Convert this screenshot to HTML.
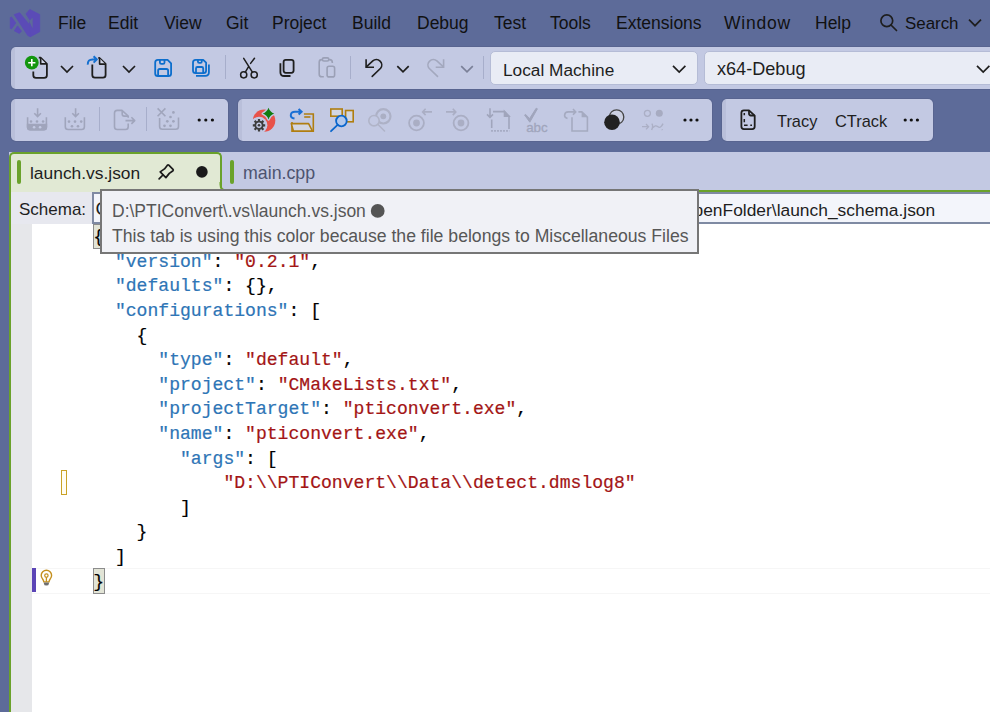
<!DOCTYPE html>
<html><head><meta charset="utf-8">
<style>
html,body{margin:0;padding:0;width:990px;height:712px;overflow:hidden;background:#5d6b99;font-family:"Liberation Sans",sans-serif;}
.a{position:absolute;}
.menu{position:absolute;top:11px;font-size:17.5px;color:#111;line-height:24px;white-space:nowrap;}
.tb{position:absolute;background:linear-gradient(90deg,#b9bfda 0,#b9bfda 4px,#c3c9e3 4px);border-radius:5px;box-shadow:0 0 0 1px rgba(75,85,125,0.3);}
.sep{position:absolute;width:1px;background:#a7aecb;}
.ic{position:absolute;overflow:visible;}
.code{position:absolute;left:93.2px;font-family:"Liberation Mono",monospace;font-size:18.08px;white-space:pre;line-height:24px;color:#000;-webkit-text-stroke:0.2px currentColor;}
.k{color:#2e75b6}.s{color:#a31515}
</style></head><body>
<!-- logo -->
<svg class="ic" style="left:0;top:0" width="50" height="45" viewBox="0 0 50 45">
<g fill="#5b4bb7" stroke="#5b4bb7" stroke-width="0.8" stroke-linejoin="round">
<path d="M10.3 17.6 L11.4 16.9 L15.8 22.9 L11.4 29.0 L10.3 28.3 Z"/>
<path d="M14.3 30.8 L17.6 25.9 L21.5 31.3 L19.2 33.4 Z"/>
<path d="M14.2 14.6 L19.6 12.7 L32.6 28.6 L30.3 36.7 L27.8 35.6 Z"/>
<path d="M25.4 14.4 L29.8 9.5 L39.7 14.5 L39.7 31.7 L30.4 36.7 L29.4 21.3 Z"/>
</g>
<path d="M24.6 13.6 L29.4 21.2" stroke="#5d6b99" stroke-width="1.3"/>
<path d="M29.3 21.3 L32.6 17.6 L32.6 28.5 Z" fill="#5d6b99"/>
</svg>
<div class="menu" style="left:58px">File</div>
<div class="menu" style="left:108px">Edit</div>
<div class="menu" style="left:164px">View</div>
<div class="menu" style="left:226px">Git</div>
<div class="menu" style="left:272px">Project</div>
<div class="menu" style="left:352px">Build</div>
<div class="menu" style="left:417px">Debug</div>
<div class="menu" style="left:494px">Test</div>
<div class="menu" style="left:550px">Tools</div>
<div class="menu" style="left:616px">Extensions</div>
<div class="menu" style="left:724px;letter-spacing:0.8px">Window</div>
<div class="menu" style="left:815px">Help</div>
<div class="menu" style="left:905px;font-size:16.9px;top:11.5px">Search</div>

<svg class="ic" style="left:870px;top:8px" width="120" height="30" viewBox="0 0 120 30" fill="none" stroke="#1e1e1e" stroke-width="1.7">
<circle cx="16.8" cy="12.8" r="5.9"/><path d="M21 17 L26.5 22.5" stroke-linecap="round"/>
<path d="M99 11.7 L105 17.7 L111 11.7"/>
</svg>
<!-- toolbar 1 -->
<div class="tb" style="left:11px;top:47px;width:990px;height:42px"></div>
<!-- toolbar 2 -->
<div class="tb" style="left:11px;top:99px;width:217px;height:42px"></div>
<div class="tb" style="left:238px;top:99px;width:474px;height:42px"></div>
<div class="tb" style="left:722px;top:99px;width:211px;height:42px"></div>

<!-- tb1 icons -->
<svg class="ic" style="left:22px;top:52px" width="30" height="30" viewBox="0 0 30 30" fill="none" stroke="#1e1e1e" stroke-width="1.8" stroke-linejoin="round">
<path d="M11.3 19.5 V23.2 Q11.3 25.9 14 25.9 H22.2 Q24.9 25.9 24.9 23.2 V11.9 L18.6 5.7 H16.8"/>
<path d="M18.7 6.3 L24.3 11.9 H18.7 Z" fill="#d3d7ea" stroke="none"/>
<path d="M18.7 5.9 V11.9 H24.7" stroke-width="1.6"/>
<circle cx="9.8" cy="10.7" r="6.9" fill="#13960f" stroke="none"/>
<path d="M6.2 10.7 H13.4 M9.8 7.1 V14.3" stroke="#fff" stroke-width="1.6"/>
</svg>
<svg class="ic" style="left:82px;top:52px" width="30" height="30" viewBox="0 0 30 30" fill="none" stroke="#1e1e1e" stroke-width="1.8" stroke-linejoin="round">
<path d="M10.3 12.6 V23 Q10.3 25.6 12.9 25.6 H21 Q23.6 25.6 23.6 23 V12 L17.3 5.8 H16.3"/>
<path d="M17.6 6.3 L23.2 12 H17.6 Z" fill="#d3d7ea" stroke="none"/>
<path d="M17.6 6 V12.1 H23.4" stroke-width="1.6"/>
<path d="M5.8 12.6 Q5.6 7.4 10.5 7.4 H14.8 M11.6 4.3 L14.9 7.4 L11.6 10.6" stroke="#1570d0" stroke-width="2"/>
</svg>
<svg class="ic" style="left:148px;top:52px" width="30" height="30" viewBox="0 0 30 30" fill="none" stroke="#0d6ecc" stroke-width="1.8" stroke-linejoin="round">
<path d="M9.8 7.8 H19.6 L23.1 11.3 V21.4 Q23.1 24 20.5 24 H9.8 Q7.2 24 7.2 21.4 V10.4 Q7.2 7.8 9.8 7.8 Z"/>
<path d="M11.9 7.8 V10.5 Q11.9 11.9 13.3 11.9 H15.1 Q16.5 11.9 16.5 10.5 V7.8"/>
<path d="M10.1 24 V18.6 Q10.1 17 11.7 17 H18.5 Q20.1 17 20.1 18.6 V24"/>
</svg>
<svg class="ic" style="left:186px;top:52px" width="30" height="30" viewBox="0 0 30 30" fill="none" stroke="#0d6ecc" stroke-width="1.8" stroke-linejoin="round">
<path d="M9.6 7.8 H17.2 L20.1 10.7 V18.5 Q20.1 21.1 17.5 21.1 H9.6 Q7 21.1 7 18.5 V10.4 Q7 7.8 9.6 7.8 Z"/>
<path d="M11.9 7.8 V9.6 Q11.9 10.9 13.2 10.9 H14.5 Q15.8 10.9 15.8 9.6 V7.8"/>
<path d="M10 21.1 V16.4 Q10 15 11.4 15 H15.8 Q17.2 15 17.2 16.4 V21.1"/>
<path d="M22.9 12.6 V20.3 Q22.9 23.8 19.4 23.8 H10"/>
</svg>
<div class="sep" style="left:225px;top:55px;height:24px"></div>
<svg class="ic" style="left:234px;top:52px" width="30" height="30" viewBox="0 0 30 30" fill="none" stroke="#1e1e1e" stroke-width="1.5" stroke-linecap="round">
<circle cx="9.7" cy="22.8" r="3.1"/><circle cx="20.2" cy="22.8" r="3.1"/>
<path d="M9.7 6.3 L18.4 20.1 M20.5 6.3 L16.6 11.4 M14.6 14.6 L11.3 20.1"/>
</svg>
<svg class="ic" style="left:272px;top:52px" width="30" height="30" viewBox="0 0 30 30" fill="none" stroke="#1e1e1e" stroke-width="1.8" stroke-linejoin="round">
<rect x="11.6" y="7.9" width="10" height="12.9" rx="2.2"/>
<path d="M8.4 11.2 V20.2 Q8.4 24 12.2 24 H18.5"/>
</svg>
<svg class="ic" style="left:312px;top:52px" width="30" height="30" viewBox="0 0 30 30" fill="none" stroke="#9ba0b6" stroke-width="1.6" stroke-linejoin="round">
<path d="M11.8 24.8 H9.8 Q7.2 24.8 7.2 22.2 V10.2 Q7.2 7.6 9.8 7.6 H10.2 M17 7.6 H17.6 Q20.3 7.6 20.3 10.3 V11"/>
<rect x="10.4" y="5.9" width="6.4" height="3.1" rx="1.5"/>
<rect x="15.1" y="14.3" width="7.5" height="10.6" rx="2"/>
</svg>
<div class="sep" style="left:350px;top:56px;height:23px"></div>
<svg class="ic" style="left:358px;top:52px" width="60" height="30" viewBox="0 0 60 30" fill="none" stroke="#1e1e1e" stroke-width="1.6" stroke-linejoin="miter">
<path d="M8.1 7.3 V15.2 H16"/>
<path d="M8.6 14.7 L14.8 8.9 A5.4 5.4 0 0 1 22.6 16.3 L14.2 24.4" stroke-linecap="round"/>
<path d="M39.3 14.2 L45 19.8 L50.7 14.2" stroke-width="1.7"/>
</svg>
<svg class="ic" style="left:420px;top:52px" width="60" height="30" viewBox="0 0 60 30" fill="none" stroke="#a3a8be" stroke-width="1.6" stroke-linejoin="miter">
<path d="M23.6 7.3 V15.2 H15.7"/>
<path d="M23.1 14.7 L16.9 8.9 A5.4 5.4 0 0 0 9.1 16.3 L17.5 24.4" stroke-linecap="round"/>
<path d="M41.2 14.2 L47 19.8 L52.8 14.2" stroke="#7b8098" stroke-width="1.7"/>
</svg>
<div class="sep" style="left:483px;top:56px;height:23px"></div>
<!-- comboboxes -->
<div class="a" style="left:490px;top:51px;width:206px;height:32px;background:#e9ecf5;border:1px solid #b5bcd6;border-radius:5px"></div>
<div class="a" style="left:503px;top:59px;font-size:17.25px;color:#1e1e1e;line-height:22px">Local Machine</div>
<div class="a" style="left:704px;top:51px;width:300px;height:32px;background:#e9ecf5;border:1px solid #b5bcd6;border-radius:5px"></div>
<div class="a" style="left:717px;top:58px;font-size:18.1px;color:#1e1e1e;line-height:22px">x64-Debug</div>

<svg class="ic" style="left:0;top:52px" width="990" height="30" viewBox="0 0 990 30" fill="none" stroke="#1e1e1e" stroke-width="1.7">
<path d="M61 14 L67 20 L73 14"/>
<path d="M123 14 L129 20 L135 14"/>
<path d="M673 13.8 L679.2 20 L685.4 13.8"/>
<path d="M977 13.8 L983.2 20 L989.4 13.8"/>
</svg>
<div class="a" style="left:777px;top:110px;font-size:16.4px;color:#1e1e1e;line-height:22px">Tracy</div>
<div class="a" style="left:835px;top:110px;font-size:16.4px;color:#1e1e1e;line-height:22px">CTrack</div>

<!-- tb2 icons -->
<svg class="ic" style="left:20px;top:104px" width="70" height="32" viewBox="0 0 70 32" fill="none" stroke="#a0a5bc" stroke-width="1.6">
<path d="M17.6 4.2 V12.4 M14.3 9.2 L17.6 12.5 L20.9 9.2"/>
<path d="M7.6 13.2 V23 Q7.6 25.8 10.4 25.8 H23.6 Q26.4 25.8 26.4 23 V13.2"/>
<path d="M7.6 20.5 H26.4 V23 Q26.4 25.8 23.6 25.8 H10.4 Q7.6 25.8 7.6 23 Z" fill="#a0a5bc"/>
<g fill="#a0a5bc" stroke="none"><circle cx="11" cy="17.5" r="1.3"/><circle cx="17" cy="17.5" r="1.3"/><circle cx="23.1" cy="17.5" r="1.3"/></g>
<g fill="#c3c9e3" stroke="none"><circle cx="14.1" cy="23.3" r="1.3"/><circle cx="20.1" cy="23.3" r="1.3"/></g>
<path d="M55.6 4.2 V12.4 M52.3 9.2 L55.6 12.5 L58.9 9.2"/>
<path d="M45.3 13.2 V22.7 Q45.3 25.5 48.1 25.5 H61.6 Q64.4 25.5 64.4 22.7 V13.2"/>
<g fill="#a0a5bc" stroke="none"><circle cx="49" cy="17.6" r="1.3"/><circle cx="55" cy="17.6" r="1.3"/><circle cx="61.2" cy="17.6" r="1.3"/><circle cx="52" cy="22.2" r="1.3"/><circle cx="58" cy="22.2" r="1.3"/></g>
</svg>
<div class="sep" style="left:99px;top:107px;height:24px"></div>
<svg class="ic" style="left:95px;top:104px" width="90" height="32" viewBox="0 0 90 32" fill="none" stroke="#a0a5bc" stroke-width="1.6" stroke-linejoin="round">
<path d="M33.2 13.8 V12 L27 6.4 H22.2 Q19.5 6.4 19.5 9.1 V22.8 Q19.5 25.5 22.2 25.5 H30.5 Q33.2 25.5 33.2 22.8 V19.6"/>
<path d="M27.2 6.6 V10 Q27.2 12.1 29.3 12.1 H33"/>
<path d="M30.5 16.6 H39.6 M36.4 13.3 L39.7 16.6 L36.4 19.9"/>
<path d="M62.6 4.4 L70.4 12.2 M70.4 4.4 L62.6 12.2"/>
<path d="M64.6 14 V22.5 Q64.6 25.3 67.4 25.3 H80.7 Q83.5 25.3 83.5 22.5 V13.5"/>
<g fill="#a0a5bc" stroke="none"><circle cx="78.4" cy="8.4" r="1.35"/><circle cx="75.5" cy="13" r="1.35"/><circle cx="72.3" cy="17.3" r="1.35"/><circle cx="78.4" cy="17.3" r="1.35"/><circle cx="69.5" cy="21.8" r="1.35"/><circle cx="75.5" cy="21.8" r="1.35"/></g>
</svg>
<div class="sep" style="left:146px;top:107px;height:24px"></div>
<svg class="ic" style="left:190px;top:104px" width="30" height="32" viewBox="0 0 30 32" fill="#111">
<circle cx="9.2" cy="16" r="1.6"/><circle cx="15.8" cy="16" r="1.6"/><circle cx="22.4" cy="16" r="1.6"/>
</svg>

<svg class="ic" style="left:245px;top:104px" width="75" height="32" viewBox="0 0 75 32">
<circle cx="19.1" cy="16.6" r="11.2" fill="#e8524a"/>
<circle cx="14" cy="21.2" r="8.4" fill="#c3c9e3"/>
<path d="M23.5 3.8 Q25 8.1 29.2 9.6 Q25 11.1 23.5 15.4 Q22 11.1 17.8 9.6 Q22 8.1 23.5 3.8 Z" fill="#107c10" stroke="#c3c9e3" stroke-width="2.6" stroke-linejoin="round"/>
<path d="M23.5 3.8 Q25 8.1 29.2 9.6 Q25 11.1 23.5 15.4 Q22 11.1 17.8 9.6 Q22 8.1 23.5 3.8 Z" fill="#107c10"/>
<g transform="translate(14 21.3)" fill="#3d3d3d">
<circle r="4.6"/>
<g stroke="#3d3d3d" stroke-width="2.2">
<path d="M0 -6.2 V6.2 M-6.2 0 H6.2 M-4.4 -4.4 L4.4 4.4 M-4.4 4.4 L4.4 -4.4"/>
</g>
<circle r="2.7" fill="#c3c9e3"/>
<circle r="1.3" fill="#3d3d3d"/>
</g>
<path d="M49.5 14.6 Q45.6 14 45.8 11 Q46.2 7.8 50 7.8 H56.3 M53.6 5 L56.6 7.8 L53.6 10.6" fill="none" stroke="#1a6fd4" stroke-width="2"/>
<path d="M47 18 V27.2 H68.3 V10 H58.9" fill="none" stroke="#b07e10" stroke-width="1.6"/>
<path d="M59.2 13 H65.4" fill="none" stroke="#b07e10" stroke-width="1.6"/>
<path d="M46.3 19.6 H63.6 L67.4 27 H48.4 Z" fill="#d3d6e2" stroke="#b07e10" stroke-width="1.6" stroke-linejoin="round"/>
</svg>
<svg class="ic" style="left:325px;top:104px" width="75" height="32" viewBox="0 0 75 32">
<rect x="5.8" y="5" width="11.4" height="7.2" fill="#d3d6e2" stroke="#b07e10" stroke-width="1.6"/>
<rect x="20.6" y="6.5" width="7.6" height="11.3" fill="#d3d6e2" stroke="#b07e10" stroke-width="1.6"/>
<circle cx="16.4" cy="17" r="5.3" fill="#b3c8ec" stroke="#0a66cc" stroke-width="1.8"/>
<path d="M12.6 20.8 L6 27.2" stroke="#0a66cc" stroke-width="1.8" stroke-linecap="round"/>
<circle cx="58.3" cy="12.3" r="7.2" fill="none" stroke="#adb1c6" stroke-width="2.2"/>
<circle cx="58.3" cy="12.3" r="2.9" fill="#abafc4"/>
<circle cx="49" cy="16.7" r="5.2" fill="#c3c9e3" stroke="#b0b4c8" stroke-width="1.6"/>
<path d="M53 20.5 L59.5 27" stroke="#b0b4c8" stroke-width="1.6" stroke-linecap="round"/>
</svg>
<svg class="ic" style="left:400px;top:104px" width="75" height="32" viewBox="0 0 75 32" fill="none" stroke="#aaaec4" stroke-width="1.8">
<circle cx="16.5" cy="19" r="7.4"/><circle cx="16.5" cy="19" r="3.4" fill="#aaaec4" stroke="none"/>
<path d="M22.6 7.9 H32 M25.6 4.7 L22.6 7.9 L25.6 11.1" stroke-width="1.6"/>
<circle cx="61" cy="19" r="7.4"/><circle cx="61" cy="19" r="3.4" fill="#aaaec4" stroke="none"/>
<path d="M46 7.9 H55.8 M52.8 4.7 L55.8 7.9 L52.8 11.1" stroke-width="1.6"/>
</svg>
<svg class="ic" style="left:480px;top:104px" width="75" height="32" viewBox="0 0 75 32" fill="none" stroke="#a0a5bc" stroke-width="1.6">
<path d="M10 4.2 V13.4 M7 10.4 L10 13.4 L13 10.4"/>
<path d="M13 7.6 H24.5 L29 12.3 V25"/>
<path d="M24.5 7.6 L29 12.3 H24.5 Z" fill="#a0a5bc"/>
<path d="M11.7 15.5 V24"/>
<path d="M11.2 26.8 H29.5" stroke-dasharray="1.6 1.4" stroke-width="1.7"/>
<path d="M44.6 11 L45.6 10.4 L49.6 14.6 L56.2 4.2 L57.4 4.8 L49.8 18.2 Z" fill="#a0a5bc" stroke-width="1" stroke-linejoin="round"/>
<text x="46.2" y="27.6" font-family="Liberation Sans" font-size="13.6" fill="#a0a5bc" stroke="#a0a5bc" stroke-width="0.3" textLength="21.5" lengthAdjust="spacingAndGlyphs">abc</text>
</svg>
<svg class="ic" style="left:558px;top:104px" width="75" height="32" viewBox="0 0 75 32">
<path d="M9.5 14.5 Q6.4 13.6 6.6 11.1 Q6.9 7.9 10.3 7.9 H17.4 M15 5 L17.7 7.9 L15 10.7" fill="none" stroke="#a5aac0" stroke-width="1.6"/>
<path d="M14 13.2 V27 H29.4 V13.2 L23.8 7.9 H20.4" fill="none" stroke="#a5aac0" stroke-width="1.6"/>
<path d="M23.6 8 L29.4 13.2 H23.6 Z" fill="#a5aac0"/>
<circle cx="58.6" cy="13" r="7.2" fill="#ccd0e2" stroke="#444" stroke-width="1.3"/>
<circle cx="54" cy="18.3" r="7.8" fill="#222"/>
</svg>
<svg class="ic" style="left:636px;top:104px" width="75" height="32" viewBox="0 0 75 32">
<circle cx="11.4" cy="9.3" r="3" fill="none" stroke="#abafc5" stroke-width="1.3"/>
<circle cx="23.3" cy="9.3" r="3.5" fill="#a7abc1"/>
<path d="M6 22.7 H12.3 M10 20 L12.6 22.7 L10 25.4" fill="none" stroke="#abafc5" stroke-width="1.3"/>
<path d="M15.8 19.6 Q17.6 21.8 15.6 26 M17.2 23.6 Q19.2 20.6 22 22.8 Q24.6 24.8 27 19.6 M25.9 25.4 L26.4 26.2" fill="none" stroke="#abafc5" stroke-width="1.4"/>
<g fill="#111"><circle cx="49" cy="16" r="1.6"/><circle cx="55" cy="16" r="1.6"/><circle cx="61" cy="16" r="1.6"/></g>
</svg>
<svg class="ic" style="left:732px;top:104px" width="35" height="32" viewBox="0 0 35 32" fill="none" stroke="#1e1e1e" stroke-width="1.8" stroke-linejoin="round">
<path d="M11.9 6.3 H17 L22.7 11.6 V22.6 Q22.7 25.1 20.2 25.1 H11.9 Q9.4 25.1 9.4 22.6 V8.8 Q9.4 6.3 11.9 6.3 Z"/>
<path d="M17 6.5 V9.6 Q17 11.5 18.9 11.5 H22.5"/>
<path d="M12.3 9 V11.3 M12.3 15 V18.2 M12 21.2 H15.6 M18.3 21.2 H20" stroke-width="1.5"/>
</svg>
<svg class="ic" style="left:896px;top:104px" width="30" height="32" viewBox="0 0 30 32" fill="#111">
<circle cx="9.2" cy="16" r="1.6"/><circle cx="15.3" cy="16" r="1.6"/><circle cx="21.4" cy="16" r="1.6"/>
</svg>
<!-- tab strip -->
<div class="a" style="left:9px;top:152px;width:981px;height:40px;background:#c3c9e3"></div>
<div class="a" style="left:9px;top:152px;width:209px;height:40px;background:#e1e9d4;border:2px solid #6aa22b;border-bottom:none;border-radius:5px 5px 0 0"></div>
<div class="a" style="left:17px;top:160px;width:4px;height:24px;background:#6aa22b;border-radius:2px"></div>
<div class="a" style="left:30px;top:162px;font-size:17.4px;color:#1e1e1e;line-height:22px">launch.vs.json</div>
<svg class="ic" style="left:150px;top:155px" width="65" height="35" viewBox="0 0 65 35">
<path d="M17.4 10.2 Q18.1 9.6 18.8 10.2 L23 14.4 Q23.6 15.1 23 15.7 L19.3 18.4 L15.9 22.6 L10.2 16.9 L14.5 13.9 Z" fill="none" stroke="#1a1a1a" stroke-width="1.7" stroke-linejoin="round"/>
<path d="M12.9 20 L9.1 23.8" stroke="#1a1a1a" stroke-width="1.7" stroke-linecap="round"/>
<circle cx="51.9" cy="16.9" r="5.8" fill="#1a1a1a"/>
</svg>
<div class="a" style="left:230px;top:160px;width:4px;height:24px;background:#6aa22b;border-radius:2px"></div>
<div class="a" style="left:243px;top:162px;font-size:17.8px;color:#4d5470;line-height:22px">main.cpp</div>
<div class="a" style="left:221px;top:190px;width:769px;height:2px;background:#6aa22b"></div>

<svg class="ic" style="left:216px;top:182px" width="12" height="10" viewBox="0 0 12 10">
<path d="M0 0 H4.5 V2.5 Q4.5 8.5 10.5 8.5 H12 V10 H0 Z" fill="#e1e9d4"/>
<path d="M4.5 0 V2.5 Q4.5 8.5 10.5 8.5 H12" fill="none" stroke="#6aa22b" stroke-width="2"/>
</svg>
<!-- left doc border -->
<div class="a" style="left:9px;top:192px;width:2px;height:520px;background:#6aa22b"></div>
<!-- schema bar -->
<div class="a" style="left:11px;top:192px;width:979px;height:32px;background:#e7e8ef"></div>
<div class="a" style="left:19px;top:199px;font-size:17px;color:#1e1e1e;line-height:22px">Schema:</div>
<div class="a" style="left:92px;top:192px;width:900px;height:28px;background:#f3f5fb;border:2px solid #7f8aa3;border-right:none"></div>
<div class="a" style="left:95.5px;top:197.5px;font-size:18.6px;color:#1e1e1e;line-height:22px">C</div>
<div class="a" style="left:680px;top:199px;font-size:17.4px;color:#1e1e1e;line-height:22px">OpenFolder\launch_schema.json</div>

<!-- gutter + editor -->
<div class="a" style="left:11px;top:224px;width:21px;height:488px;background:#e6e7ea"></div>
<div class="a" style="left:32px;top:224px;width:958px;height:488px;background:#fff"></div>

<!-- editor decorations -->
<div class="a" style="left:32px;top:568px;width:958px;height:24px;border-top:1px solid #f6f6f6;border-bottom:1px solid #f6f6f6"></div>
<div class="a" style="left:32px;top:568px;width:4px;height:24px;background:#5b45b6"></div>
<svg class="ic" style="left:38px;top:568px" width="18" height="22" viewBox="0 0 18 22">
<path d="M4.6 11 A5.2 5.2 0 1 1 12.2 11 Q11.2 12.2 11 13.9 H5.8 Q5.6 12.2 4.6 11 Z" fill="none" stroke="#c4901f" stroke-width="1.4"/>
<circle cx="8.4" cy="7.6" r="1.7" fill="none" stroke="#c4901f" stroke-width="1.2"/>
<path d="M8.4 9.3 V13.8" stroke="#c4901f" stroke-width="1.3"/>
<path d="M5.9 14.6 H10.9 V15.4 Q10.9 17.6 8.4 17.6 Q5.9 17.6 5.9 15.4 Z" fill="#6e6e6e"/>
</svg>
<div class="a" style="left:93px;top:568px;width:10px;height:24px;background:#e2e4d6;border:1px solid #8c8c8c"></div>
<div class="a" style="left:93px;top:224px;width:10px;height:23px;background:#e2e4d6;border:1px solid #8c8c8c"></div>
<div class="a" style="left:61px;top:470px;width:4px;height:23px;background:#fffdf2;border:1px solid #c9a227"></div>
<!-- code -->
<div class="code" style="top:225.10px">{</div>
<div class="code" style="top:249.70px">  <span class="k">"version"</span>: <span class="s">"0.2.1"</span>,</div>
<div class="code" style="top:274.30px">  <span class="k">"defaults"</span>: {},</div>
<div class="code" style="top:298.90px">  <span class="k">"configurations"</span>: [</div>
<div class="code" style="top:323.50px">    {</div>
<div class="code" style="top:348.10px">      <span class="k">"type"</span>: <span class="s">"default"</span>,</div>
<div class="code" style="top:372.70px">      <span class="k">"project"</span>: <span class="s">"CMakeLists.txt"</span>,</div>
<div class="code" style="top:397.30px">      <span class="k">"projectTarget"</span>: <span class="s">"pticonvert.exe"</span>,</div>
<div class="code" style="top:421.90px">      <span class="k">"name"</span>: <span class="s">"pticonvert.exe"</span>,</div>
<div class="code" style="top:446.50px">        <span class="k">"args"</span>: [</div>
<div class="code" style="top:471.10px">            <span class="s">"D:\\PTIConvert\\Data\\detect.dmslog8"</span></div>
<div class="code" style="top:495.70px">        ]</div>
<div class="code" style="top:520.30px">    }</div>
<div class="code" style="top:544.90px">  ]</div>
<div class="code" style="top:569.50px">}</div>
<!-- tooltip -->
<div class="a" style="left:100px;top:189px;width:595px;height:61px;background:#f0f1f6;border:2px solid #767676"></div>
<div class="a" style="left:112px;top:200px;font-size:17.5px;color:#575757;line-height:22px">D:\PTIConvert\.vs\launch.vs.json</div>
<div class="a" style="left:112px;top:224.5px;font-size:17.65px;color:#575757;line-height:22px">This tab is using this color because the file belongs to Miscellaneous Files</div>

<svg class="ic" style="left:368px;top:201px" width="20" height="20" viewBox="0 0 20 20"><circle cx="9.7" cy="9.9" r="6.9" fill="#555"/></svg>
</body></html>
